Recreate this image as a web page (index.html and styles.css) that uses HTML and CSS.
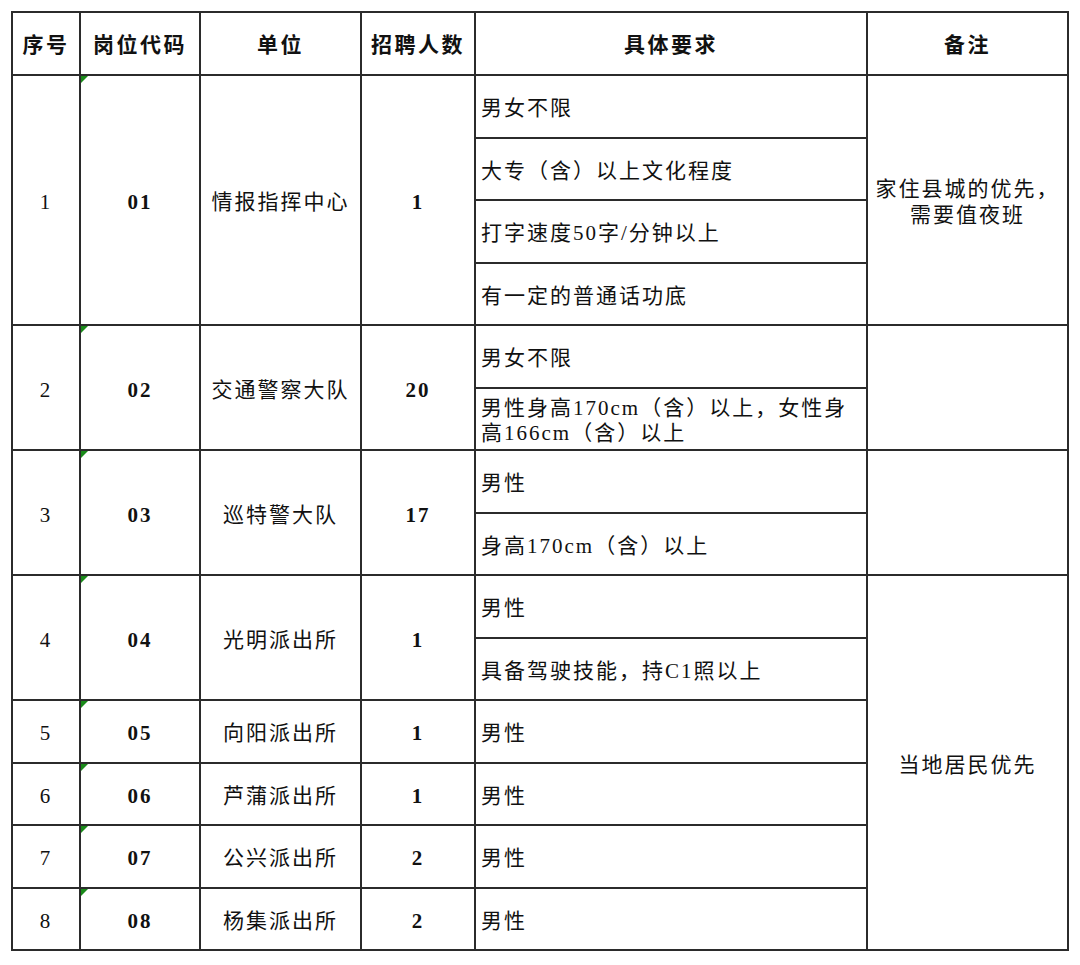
FILE: index.html
```html
<!DOCTYPE html>
<html lang="zh">
<head>
<meta charset="utf-8">
<link rel="stylesheet" href="styles.css">
</head>
<body>
<table class="grid">
  <colgroup>
    <col class="c1"><col class="c2"><col class="c3"><col class="c4"><col class="c5"><col class="c6">
  </colgroup>
  <thead>
    <tr class="head">
      <th>序号</th><th>岗位代码</th><th>单位</th><th>招聘人数</th><th>具体要求</th><th>备注</th>
    </tr>
  </thead>
  <tbody>
    <tr>
      <td rowspan="4" class="num">1</td>
      <td rowspan="4" class="code">01</td>
      <td rowspan="4" class="unit">情报指挥中心</td>
      <td rowspan="4" class="cnt">1</td>
      <td class="req">男女不限</td>
      <td rowspan="4" class="note">家住县城的优先，<br>需要值夜班</td>
    </tr>
    <tr><td class="req">大专（含）以上文化程度</td></tr>
    <tr><td class="req">打字速度50字/分钟以上</td></tr>
    <tr><td class="req">有一定的普通话功底</td></tr>

    <tr>
      <td rowspan="2" class="num">2</td>
      <td rowspan="2" class="code">02</td>
      <td rowspan="2" class="unit">交通警察大队</td>
      <td rowspan="2" class="cnt">20</td>
      <td class="req">男女不限</td>
      <td rowspan="2" class="note"></td>
    </tr>
    <tr><td class="req tight">男性身高170cm（含）以上，女性身<br>高166cm（含）以上</td></tr>

    <tr>
      <td rowspan="2" class="num">3</td>
      <td rowspan="2" class="code">03</td>
      <td rowspan="2" class="unit">巡特警大队</td>
      <td rowspan="2" class="cnt">17</td>
      <td class="req">男性</td>
      <td rowspan="2" class="note"></td>
    </tr>
    <tr><td class="req">身高170cm（含）以上</td></tr>

    <tr>
      <td rowspan="2" class="num">4</td>
      <td rowspan="2" class="code">04</td>
      <td rowspan="2" class="unit">光明派出所</td>
      <td rowspan="2" class="cnt">1</td>
      <td class="req">男性</td>
      <td rowspan="6" class="note">当地居民优先</td>
    </tr>
    <tr><td class="req">具备驾驶技能，持C1照以上</td></tr>

    <tr>
      <td class="num">5</td><td class="code">05</td><td class="unit">向阳派出所</td><td class="cnt">1</td><td class="req">男性</td>
    </tr>
    <tr>
      <td class="num">6</td><td class="code">06</td><td class="unit">芦蒲派出所</td><td class="cnt">1</td><td class="req">男性</td>
    </tr>
    <tr>
      <td class="num">7</td><td class="code">07</td><td class="unit">公兴派出所</td><td class="cnt">2</td><td class="req">男性</td>
    </tr>
    <tr>
      <td class="num">8</td><td class="code">08</td><td class="unit">杨集派出所</td><td class="cnt">2</td><td class="req">男性</td>
    </tr>
  </tbody>
</table>
</body>
</html>
```

FILE: styles.css
```css
html, body {
  margin: 0;
  padding: 0;
  background: #ffffff;
}
body {
  padding: 11px 0 0 11px;
  font-family: "Liberation Serif", "Noto Sans CJK SC", serif;
  color: #111111;
}
.grid {
  border-collapse: collapse;
  table-layout: fixed;
  width: 1056px;
}
.c1 { width: 68px; }
.c2 { width: 120px; }
.c3 { width: 161px; }
.c4 { width: 114px; }
.c5 { width: 392px; }
.c6 { width: 201px; }

.grid th, .grid td {
  border: 2px solid #2b2b2b;
  padding: 4px 0 0 0;
  font-size: 21px;
  letter-spacing: 2px;
  line-height: 26px;
  text-align: center;
  vertical-align: middle;
}
.head th {
  height: 59px;
  padding-top: 2px;
  font-weight: 700;
  letter-spacing: 2.5px;
}
.grid tbody tr {
  height: 62.5px;
}
.num { font-weight: 400; }
.code {
  position: relative;
  font-weight: 700;
}
.code::before {
  content: "";
  position: absolute;
  left: 0;
  top: 0;
  border-top: 7px solid #1a8a1a;
  border-right: 7px solid transparent;
}
.cnt { font-weight: 700; }
.req {
  text-align: left !important;
  padding-left: 5px !important;
  white-space: nowrap;
}
.req.tight { line-height: 25px; }
.note { line-height: 28px; }
```
